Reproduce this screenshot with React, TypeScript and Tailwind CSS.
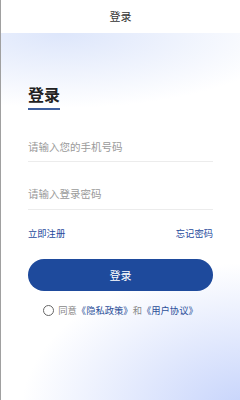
import React from "react";

export default function App() {
  return (
    <div
      className="w-[240px] h-[400px] flex flex-col border-l border-[#a0a0a0] bg-white overflow-hidden"
      style={{ fontFamily: '"Noto Sans CJK SC", "Noto Sans", sans-serif' }}
    >
      <div className="h-[33px] shrink-0 flex items-center justify-center bg-white">
        <span className="text-[11px] text-[#333] leading-none">登录</span>
      </div>
      <div className="flex-1 flex flex-col px-[27px] bg-[radial-gradient(ellipse_230px_75px_at_60px_0px,#dde6fb,rgba(255,255,255,0)),radial-gradient(ellipse_230px_150px_at_250px_380px,#c4d2fb,rgba(255,255,255,0))]">
        <div className="mt-[51px] text-[16px] font-bold text-[#222] leading-[20px]">登录</div>
        <div className="mt-[4px] w-[32px] h-[2px] bg-[#3d5f9e]"></div>
        <div className="mt-[23px] h-[28px] flex items-center text-[10.5px] text-[#9a9a9a]">
          请输入您的手机号码
        </div>
        <div className="h-px bg-[#ececec]"></div>
        <div className="mt-[17px] h-[30px] flex items-center text-[10.5px] text-[#9a9a9a]">
          请输入登录密码
        </div>
        <div className="h-px bg-[#ececec]"></div>
        <div className="mt-[16px] flex justify-between text-[9.3px] text-[#1e4a9c] leading-[14px]">
          <span>立即注册</span>
          <span>忘记密码</span>
        </div>
        <button className="mt-[19px] h-[32px] rounded-full bg-[#1e4a9c] text-white text-[11px] flex items-center justify-center">
          登录
        </button>
        <div className="mt-[13px] flex items-center justify-center text-[9.3px] leading-[12px] text-[#888]">
          <span className="w-[11px] h-[11px] rounded-full border border-[#666] mr-[4px]"></span>
          <span>同意</span>
          <span className="text-[#2b4f99]">《隐私政策》</span>
          <span>和</span>
          <span className="text-[#2b4f99]">《用户协议》</span>
        </div>
      </div>
    </div>
  );
}
